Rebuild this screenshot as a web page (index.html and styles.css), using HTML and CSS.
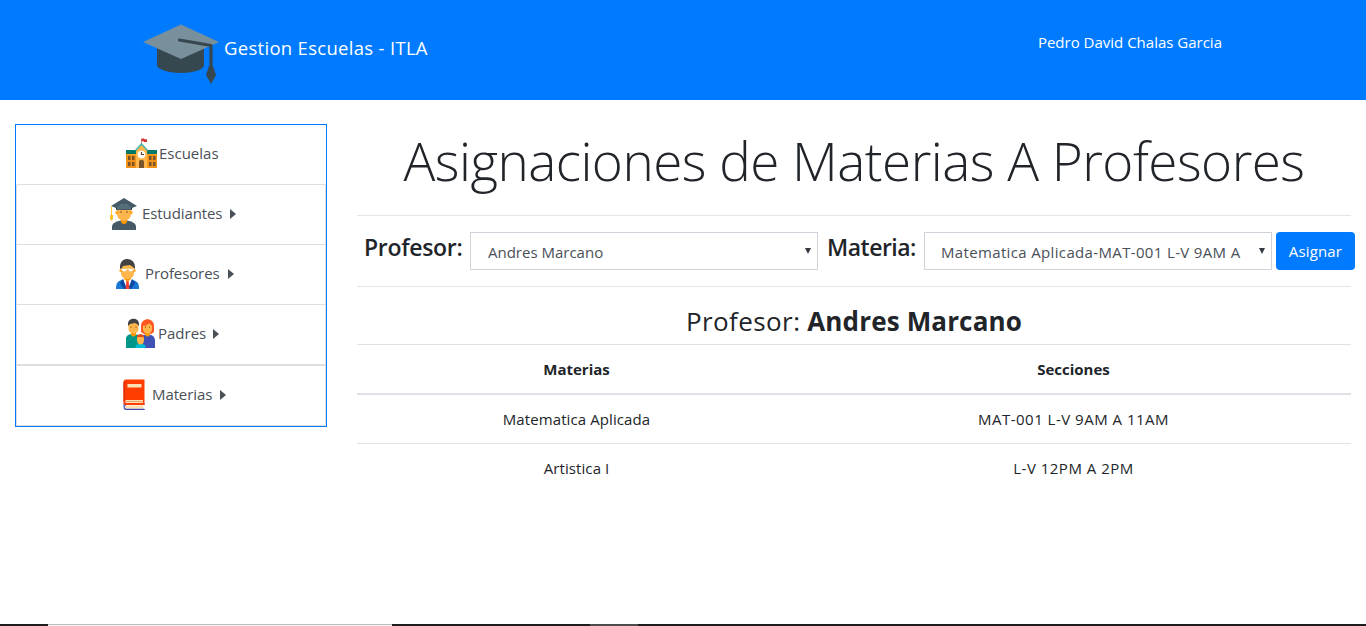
FILE: index.html
```
<!DOCTYPE html>
<html lang="es">
<head>
<meta charset="utf-8">
<title>Gestion Escuelas - ITLA</title>
<link rel="stylesheet" href="styles.css">
</head>
<body>
<div class="page">
  <header class="navbar">
    <a class="brand">
      <svg class="brand-icon" viewBox="0 0 76 60">
        <path fill="#37474f" d="M14 22v19c0 4 10 8 24 8s23-4 23-8V22z"/>
        <path fill="#78909c" d="M38 .500 76 18 38 35 0 18z"/>
        <path fill="none" stroke="#37474f" stroke-width="3.200" stroke-linecap="round" stroke-linejoin="round" d="M36.500 16l31.500 5.500v22"/>
        <path fill="#37474f" d="M66 42h4l3 9-5 9-5-9z"/>
      </svg>
      <span class="brand-text">Gestion Escuelas - ITLA</span>
    </a>
    <span class="user">Pedro David Chalas Garcia</span>
  </header>

  <div class="content">
    <nav class="sidebar">
      <a class="item item-schools">
        <svg class="icon" viewBox="0 0 32 32">
          <path fill="#ff9f1c" d="M0 13h31v17H0z"/>
          <path fill="#f0921a" d="M0 17h10v13H0zM22 17h9v13h-9z"/>
          <path fill="#00796b" d="M0 12h31v4H0z"/>
          <path fill="#ffb74d" d="M10 30V12l5.500-6 5.500 6v18z"/>
          <path fill="none" stroke="#4db6ac" stroke-width="1.600" d="M9.500 12.500 15.500 6l6 6.500"/>
          <path stroke="#8d6e63" stroke-width=".700" d="M15.500 1v5"/>
          <path fill="#d32f2f" d="M15.500.500h2.500l.500.800h2.500V4h-3l-.500-.700h-2z"/>
          <circle cx="15.500" cy="16.500" r="3.800" fill="#fff"/>
          <path fill="none" stroke="#5d4037" stroke-width="1.200" d="M15.500 14v2.500h2.500"/>
          <path fill="#7a5329" d="M2 18h2.500v4H2zM6 18h2.500v4H6zM2 24h2.500v4H2zM6 24h2.500v4H6zM23 18h2.500v4H23zM27 18h2.500v4H27zM23 24h2.500v4H23zM27 24h2.500v4H27z"/>
          <path fill="#795529" d="M13 30v-6c0-3 5-3 5 0v6z"/>
        </svg>
        <span>Escuelas</span>
      </a>
      <a class="item item-students">
        <svg class="icon" viewBox="0 0 32 32">
          <path fill="#455a64" d="M4 32v-3c0-4 4-6 12-7 8 1 12 3 12 7v3z"/>
          <path fill="#ff9800" d="M13 20h6v4c-2 3-4 3-6 0z"/>
          <path fill="#ffb74d" d="M9 8h14v8c0 9-14 9-14 0z"/>
          <circle cx="9" cy="14.500" r="1.700" fill="#ffa726"/><circle cx="23" cy="14.500" r="1.700" fill="#ffa726"/>
          <path fill="#37474f" d="M8 7h16v5H8z"/>
          <path fill="#546e7a" d="M8.500 9c2-4 13-4 15 0l-1 3c-3-1-10-1-13 0z"/>
          <path fill="#455a64" d="M16 0 29 8l-5 2c-3-5-13-5-16 0L3 8z"/>
          <path fill="none" stroke="#ffca28" stroke-width="1" d="M3.500 8.500v11"/>
          <path fill="#fbc02d" d="M2 17h3v4l-1.500 2L2 21z"/>
          <circle cx="13" cy="14" r=".800" fill="#784719"/><circle cx="19" cy="14" r=".800" fill="#784719"/>
        </svg>
        <span>Estudiantes</span><i class="caret"></i>
      </a>
      <a class="item item-teachers">
        <svg class="icon" viewBox="0 0 32 32">
          <path fill="#1976d2" d="M5 31c0-7 2-8 8-10h6c7 2 9 3 9 10z"/>
          <path fill="#fff" d="M12 21h9l-2 10h-4z"/>
          <path fill="#0d47a1" d="m12 21 4 10h-3l-4-6zm9 0-4 10h3l4-6z"/>
          <path fill="#f44336" d="M15.500 22h2l1 9h-4z"/>
          <path fill="#ff9800" d="M13 17h7v4l-3.500 2.500L13 21z"/>
          <path fill="#ffb74d" d="M10 6h13v9c0 8-13 8-13 0z"/>
          <circle cx="9.800" cy="12.500" r="1.500" fill="#ffa726"/><circle cx="23.200" cy="12.500" r="1.500" fill="#ffa726"/>
          <path fill="#424242" d="M9 11V9c0-11 15-10 15 0v2l-2-2-3-2-7 1-1 2z"/>
          <path fill="#fff" stroke="#c9a36a" stroke-width=".400" d="M11 11h4.500v1c0 2-4.500 2-4.500 0zM17.500 11H22v1c0 2-4.500 2-4.500 0z"/>
          <path stroke="#fff" stroke-width=".700" d="M10 11.300h13"/>
        </svg>
        <span>Profesores</span><i class="caret"></i>
      </a>
      <a class="item item-parents">
        <svg class="icon" viewBox="0 0 32 32">
          <path fill="#009688" d="M1 30V20c1-4 5-4 7-4 5 0 8 2 8 6v8z"/>
          <path fill="#3f51b5" d="M15 30v-7c0-5 3-6 7-7 5 1 8 2 8 7v7z"/>
          <path fill="#ff9800" d="M6 13h5v4c-2 2-3 2-5 0z"/>
          <path fill="#ffb74d" d="M3.500 5h10v6c0 6-10 6-10 0z"/>
          <path fill="#424242" d="M3 8V6c0-7 11-7 11 0v2l-2-2-2-1-5 1z"/>
          <path fill="#ff5722" d="M16 14V8c0-9 13-9 13 0v6l-3 2h-7z"/>
          <path fill="#ff9800" d="M20 13h5v4c-2 2-3 2-5 0z"/>
          <path fill="#ffb74d" d="M18 8c3 0 5-1 6-3l3 3v3c0 6-9 6-9 0z"/>
          <path fill="#a8661d" d="M5.500 8.500h1V10h-1zM10.500 8.500h1V10h-1zM20 8.500h1V10h-1zM24 8.500h1V10h-1z"/>
          <path fill="#00bcd4" d="M10.500 30v-2c1-3 9-3 10 0v2z"/>
          <path fill="#ffb74d" d="M12 18h7v4c0 6-7 6-7 0z"/>
          <path fill="#e64a19" d="M12 20v-1c0-4 7-4 7 0v1l-1-1h-5z"/>
        </svg>
        <span>Padres</span><i class="caret"></i>
      </a>
      <a class="item item-subjects">
        <svg class="icon" viewBox="0 0 32 32">
          <path fill="#5c6bc0" d="M5.500 24h21v2H8v4h18.500v1H8c-2 0-2.500-1-2.500-3z"/>
          <path fill="#ffe0b2" d="M8 26.500h17.500v3H8c-1.500 0-1.500-3 0-3z"/>
          <path fill="#3949ab" d="M7 29.800h19.500V31H8z"/>
          <path fill="#ff3d00" d="M8 .500h18.500V26H8c-2 0-2.500-1-2.500-3V3C5.500 1.500 6.500.500 8 .500z"/>
          <path fill="#dd2c00" d="M5.500 3h1.500v18l-1.500 2z"/>
          <path fill="#ffe0b2" d="M9.500 5H23.500v3.500h-14zM8 21h17v3H8c-1 0-1-3 0-3z"/>
          <path stroke="#e08a50" stroke-width=".700" d="M8 22.500h17"/>
        </svg>
        <span>Materias</span><i class="caret"></i>
      </a>
    </nav>

    <main class="main">
      <h1 class="title"><span>Asignaciones de Materias A Profesores</span></h1>
      <form class="assign">
        <label class="label label-teacher">Profesor:</label>
        <div class="select select-teacher"><span>Andres Marcano</span><i class="arrow"></i></div>
        <label class="label label-subject">Materia:</label>
        <div class="select select-subject"><span>Matematica Aplicada-MAT-001 L-V 9AM A</span><i class="arrow"></i></div>
        <button class="button" type="button">Asignar</button>
      </form>
      <h3 class="subtitle"><span>Profesor:</span> <b>Andres Marcano</b></h3>
      <table class="table">
        <thead>
          <tr><th>Materias</th><th>Secciones</th></tr>
        </thead>
        <tbody>
          <tr><td>Matematica Aplicada</td><td class="section">MAT-001 L-V 9AM A 11AM</td></tr>
          <tr><td>Artistica I</td><td class="section">L-V 12PM A 2PM</td></tr>
        </tbody>
      </table>
    </main>
  </div>

  <div class="taskbar"><div class="task-open"></div><div class="task-active"></div></div>
</div>
</body>
</html>
```
FILE: styles.css
```
* { box-sizing: border-box; }
body {
  margin: 0;
  background: #fff;
  color: #212529;
  font: 15px/24px "Open Sans", "Noto Sans", sans-serif;
}
.page { display: flex; flex-direction: column; height: 626px; overflow: hidden; }
.navbar {
  display: flex;
  justify-content: space-between;
  height: 100px;
  padding: 24px 144px 0 143px;
  background: #007bff;
  color: #fff;
}
.brand { display: flex; align-items: flex-start; }
.brand-icon { width: 76px; height: 60px; }
.brand-text { padding: 12px 0 0 5px; font-size: 18.500px; letter-spacing: .3px; white-space: nowrap; }
.user { padding-top: 6px; white-space: nowrap; }

.content { display: flex; flex: 1; padding: 24px 15px 0; gap: 30px; }
.sidebar { width: 312px; height: 303px; flex: none; border: 1px solid #007bff; }
.item {
  display: flex;
  align-items: flex-start;
  height: 60px;
  border: solid #dfdfdf;
  border-width: 0 1px 1px;
  color: #495057;
  white-space: nowrap;
}
.item:first-child { border-left-color: #fff; border-right-color: #fff; }
.item-parents { height: 61px; border-bottom-width: 2px; }
.icon { width: 32px; height: 32px; margin-top: 13px; }
.item span { padding-top: 16px; letter-spacing: -.1px; }
.caret {
  margin: 24px 0 0 8px;
  border: solid transparent;
  border-width: 5px 0 5px 6px;
  border-left-color: #495057;
}
.item-schools { padding-left: 109px; }
.item-students { padding-left: 91px; }
.item-teachers { padding-left: 94px; }
.item-parents { padding-left: 108px; }
.item-subjects { padding-left: 101px; }
.item-schools span, .item-parents span { padding-left: 1px; letter-spacing: 0; }
.item-students span { padding-left: 2px; }
.item-teachers span { padding-left: 2px; }
.item-subjects span { padding-left: 2px; }
.item-parents .caret { margin-left: 7px; }

.main { width: 994px; flex: none; }
.title {
  display: flex;
  justify-content: center;
  height: 92px;
  margin: 0;
  border-bottom: 1px solid #e5e5e5;
  font-size: 53px;
  font-weight: 300;
  letter-spacing: -.52px;
  line-height: 73px;
  white-space: nowrap;
}
.assign {
  display: flex;
  width: 998px;
  height: 70px;
  padding: 16px 0 0 7px;
}
.label { font-size: 23px; font-weight: 600; letter-spacing: -.3px; line-height: 31px; white-space: nowrap; }
.label-teacher { width: 106px; }
.label-subject { width: 97px; letter-spacing: -.5px; }
.select {
  display: flex;
  justify-content: space-between;
  height: 38px;
  padding: 7px 6px 0 17px;
  border: 1px solid #ced4da;
  color: #495057;
  white-space: nowrap;
}
.select-teacher { width: 348px; margin-right: 9px; }
.select-subject { width: 348px; margin-right: 4px; padding-left: 16px; letter-spacing: .35px; }
.arrow {
  height: 0;
  margin-top: 8px;
  border: solid transparent;
  border-width: 6px 3px 0;
  border-top-color: #343a40;
}
.button {
  width: 79px;
  height: 38px;
  padding: 0;
  border: 0;
  border-radius: 4px;
  background: #007bff;
  color: #fff;
  font: inherit;
  letter-spacing: .15px;
}
.subtitle {
  height: 58px;
  margin: 0;
  padding-top: 17px;
  border-top: 1px solid #e5e5e5;
  font-size: 26px;
  font-weight: 400;
  letter-spacing: .15px;
  line-height: 34px;
  text-align: center;
  white-space: nowrap;
}
.subtitle span { letter-spacing: .4px; }
.table { width: 100%; border-collapse: separate; border-spacing: 0; table-layout: fixed; text-align: center; }
.table th, .table td { padding: 12px; border-top: 1px solid #dee2e6; }
.table th:first-child, .table td:first-child { width: 439px; }
.table th { border-bottom: 2px solid #dee2e6; font-weight: 700; }
.table tbody tr:first-child td { border-top: 0; }
.table td { letter-spacing: .1px; }
.table .section { letter-spacing: .5px; }

.taskbar { display: flex; height: 2px; background: #1d1d1f; }
.task-open { width: 344px; margin: 0 198px 0 48px; border-top: 1px solid #c0c0c0; background: #f4f4f4; }
.task-active { width: 48px; background: #4d4d4f; }
```
